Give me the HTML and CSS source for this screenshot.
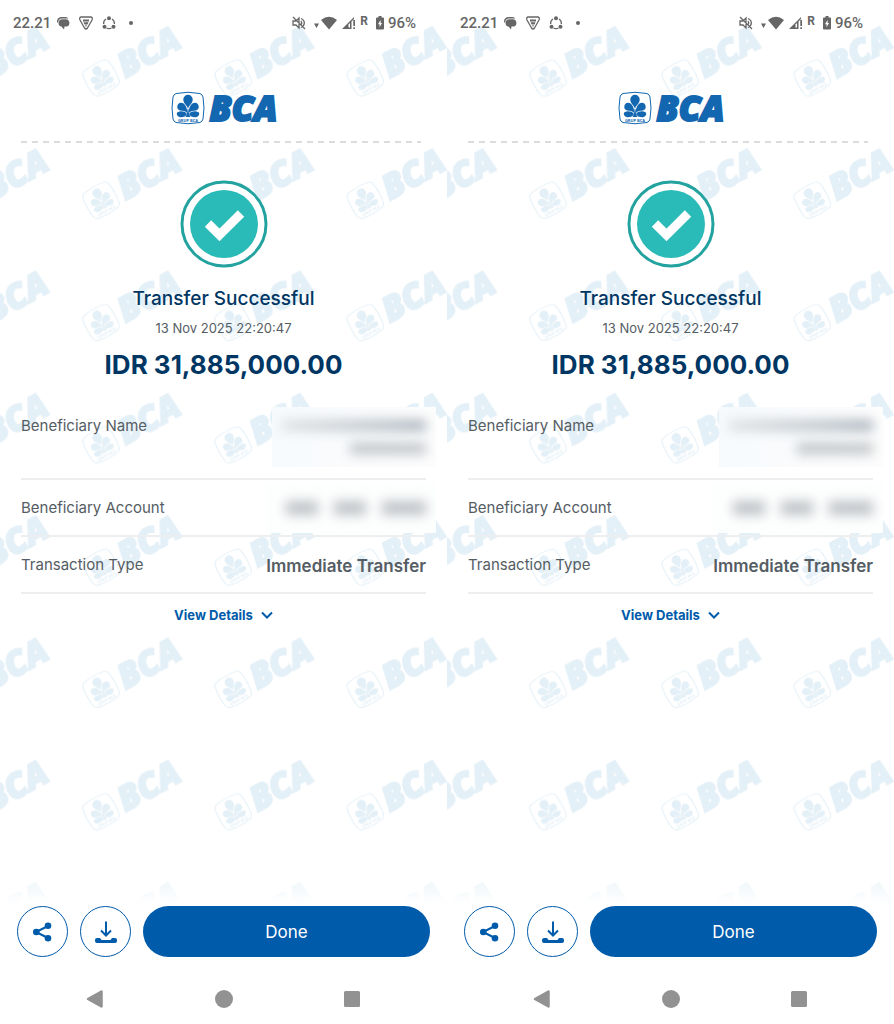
FILE: index.html
```html
<!DOCTYPE html>
<html lang="en">
<head>
    <meta charset="UTF-8">
    <meta name="viewport" content="width=device-width, initial-scale=1.0">
    <title>Transfer Successful | BCA</title>
    <link rel="stylesheet" href="styles.css">
</head>
<body>
    <!-- Shared icons -->
    <svg class="sprite" width="0" height="0" aria-hidden="true">
        <defs>
            <symbol id="logo" viewBox="-17 -18 108 36">
                <path d="M-12 -14.500Q0 -17 12 -14.500Q14.500 -13.500 15 -11Q17 0 15 11Q14.500 13.500 12 14.500Q0 17 -12 14.500Q-14.500 13.500 -15 11Q-17 0 -15 -11Q-14.500 -13.500 -12 -14.500Z" fill="#fff" stroke="currentColor" stroke-width="1"/>
                <g fill="currentColor">
                    <path d="M0 1C-.5 -3 -4.700 -4 -4.700 -8.500A4.700 4.700 0 0 1 4.700 -8.500C4.700 -4 .5 -3 0 1Z"/>
                    <path d="M-.8 5C-.5 1 -2.500 -5.200 -7 -5.200A3.900 3.900 0 0 0 -8 2.400C-5 2.800 -2.500 2.500 -.8 5Z"/>
                    <path d="M.8 5C.5 1 2.500 -5.200 7 -5.200A3.900 3.900 0 0 1 8 2.400C5 2.800 2.500 2.500 .8 5Z"/>
                    <path d="M-1 6C-3 2.800 -8 2.800 -10.500 4.200C-12.500 6 -10 9.300 -7 9.300C-4 9.300 -2 8 -1 6Z"/>
                    <path d="M1 6C3 2.800 8 2.800 10.500 4.200C12.500 6 10 9.300 7 9.300C4 9.300 2 8 1 6Z"/>
                    <path d="M-.4 1H.4L1 6L2.500 9H-2.500L-1 6Z"/>
                </g>
                <text class="logo-group" x="0" y="13.500" text-anchor="middle">GRUP BCA</text>
                <text class="logo-name" x="21.500" y="12.500">BCA</text>
            </symbol>
            <pattern id="marks" x="66" y="20" width="132.200" height="122.300" patternUnits="userSpaceOnUse">
                <use class="mark" href="#logo" x="-17" y="-18" width="108" height="36" transform="translate(35 58) rotate(-29) scale(.98)"/>
            </pattern>
            <symbol id="chat" viewBox="0 0 14 14">
                <path d="M1 6C1 2.500 3 1 6 1H9C10.500 1 11.500 1.500 12.200 2.500H6C3.500 2.500 2.200 4 2 7Z" fill="currentColor"/>
                <path d="M2.500 7C2.500 4.500 4 3.200 6.500 3.200H10C14.500 3.200 14.500 10.500 10.500 10.500H8.500L8 13.500L5.500 10.500C3.500 10.300 2.500 9 2.500 7Z" fill="currentColor"/>
            </symbol>
            <symbol id="shield" viewBox="0 0 14 14">
                <path d="M2 1H12Q14 1.500 13 4L8.500 12Q7 14 5.500 12L1 4Q0 1.500 2 1Z" fill="none" stroke="currentColor" stroke-width="1.300"/>
                <path d="M4 3.500H10V5.500H4ZM4.500 6.300H9.500L8.500 8.500H5.500ZM6 9.300H8L7 11Z" fill="currentColor"/>
            </symbol>
            <symbol id="nodes" viewBox="0 0 14 14">
                <path d="M4 3C2 4 1.500 6 1.600 8M10 3C12 4 12.500 6 12.400 8M4.500 12Q7 13.200 9.500 12" fill="none" stroke="currentColor" stroke-width="1.300"/>
                <g fill="currentColor"><circle cx="7" cy="2.300" r="2"/><circle cx="2.500" cy="10.700" r="2"/><circle cx="11.500" cy="10.700" r="2"/></g>
            </symbol>
            <symbol id="mute" viewBox="0 0 14 14">
                <path d="M1 5H4L7 2V12L4 9H1ZM9 5Q10.500 7 9 9M9 2.500Q12.500 4 12.300 7Q12.300 10 9 11.500M1 1L13 13" fill="none" stroke="currentColor" stroke-width="1.300"/>
            </symbol>
            <symbol id="wifi" viewBox="0 0 24 14">
                <path d="M0 7.500H5L2.500 12ZM7 4Q15 -2.500 23 4L15 13.500Z" fill="currentColor"/>
            </symbol>
            <symbol id="signal" viewBox="0 0 14 14">
                <path d="M0 13L12 1V3L9.500 5.500V13ZM11.300 4H13V10H11.300ZM11.300 11.300H13V13H11.300Z" fill="currentColor"/>
                <path d="M6.500 8.500L8 7V11.500H6.500Z" fill="#fff"/>
            </symbol>
            <symbol id="battery" viewBox="0 0 8 14">
                <path fill-rule="evenodd" d="M2.500 0H5.500V1.500H7Q8 1.500 8 2.500V12.500Q8 13.500 7 13.500H1Q0 13.500 0 12.500V2.500Q0 1.500 1 1.500H2.500ZM4.600 4L2 8.300H3.600V11.200L6 7H4.600Z" fill="currentColor"/>
            </symbol>
            <symbol id="success" viewBox="0 0 88 88">
                <circle cx="44" cy="44" r="42" fill="#fff" stroke="#23a39f" stroke-width="3"/>
                <circle cx="44" cy="44" r="34" fill="#2abab7"/>
                <path d="M28 43.500L39.500 55L61 33.500" fill="none" stroke="#fff" stroke-width="9"/>
            </symbol>
            <symbol id="chevron" viewBox="0 0 12 8">
                <path d="M1 1.500L6 6.500L11 1.500" fill="none" stroke="currentColor" stroke-width="2"/>
            </symbol>
            <symbol id="share" viewBox="0 0 20 20">
                <path d="M15 4L3 10L15 16" fill="none" stroke="currentColor" stroke-width="2"/>
                <g fill="currentColor"><circle cx="3.300" cy="10" r="3.300"/><circle cx="15" cy="3.700" r="3.300"/><circle cx="15" cy="16.300" r="3.300"/></g>
            </symbol>
            <symbol id="download" viewBox="0 0 22 22">
                <path d="M11 .5V14.500M6 9.500L11 14.500L16 9.500" fill="none" stroke="currentColor" stroke-width="2"/>
                <path d="M2 17H5L6.500 19H15.500L17 17H20Q22 17 22 19V20Q22 22 20 22H2Q0 22 0 20V19Q0 17 2 17Z" fill="currentColor"/>
            </symbol>
            <symbol id="nav-back" viewBox="0 0 18 18">
                <path d="M15.500 1.500L2 9L15.500 16.500Z" fill="currentColor" stroke="currentColor" stroke-width="2.500" stroke-linejoin="round"/>
            </symbol>
            <symbol id="nav-home" viewBox="0 0 18 18">
                <circle cx="9" cy="9" r="9" fill="currentColor"/>
            </symbol>
            <symbol id="nav-recent" viewBox="0 0 18 18">
                <rect x="1" y="1" width="16" height="16" rx="1.500" fill="currentColor"/>
            </symbol>
        </defs>
    </svg>

    <main class="screens">
        <section class="phone">
            <svg class="watermark" aria-hidden="true"><rect width="100%" height="100%" fill="url(#marks)"/></svg>
            <div class="status-bar">
                <span class="clock">22.21</span>
                <svg class="status-icon"><use href="#chat"/></svg>
                <svg class="status-icon"><use href="#shield"/></svg>
                <svg class="status-icon"><use href="#nodes"/></svg>
                <span class="dot"></span>
                <div class="status-right">
                    <svg class="status-icon"><use href="#mute"/></svg>
                    <svg class="wifi-icon"><use href="#wifi"/></svg>
                    <svg class="status-icon"><use href="#signal"/></svg>
                    <span class="roaming">R</span>
                    <svg class="battery-icon"><use href="#battery"/></svg>
                    <span>96%</span>
                </div>
            </div>
            <header class="brand">
                <svg class="logo" role="img" aria-label="BCA"><use href="#logo"/></svg>
            </header>
            <div class="receipt">
                <svg class="success-icon" aria-hidden="true"><use href="#success"/></svg>
                <h1>Transfer Successful</h1>
                <p class="date">13 Nov 2025 22:20:47</p>
                <p class="amount">IDR 31,885,000.00</p>
                <dl class="details">
                    <div class="row row-name">
                        <dt>Beneficiary Name</dt>
                        <dd class="hidden-value"><span class="smudge smudge-long"></span><span class="smudge smudge-short"></span></dd>
                    </div>
                    <div class="row">
                        <dt>Beneficiary Account</dt>
                        <dd class="hidden-value hidden-account"><span class="smudge smudge-part"></span><span class="smudge smudge-part"></span><span class="smudge"></span></dd>
                    </div>
                    <div class="row">
                        <dt>Transaction Type</dt>
                        <dd>Immediate Transfer</dd>
                    </div>
                </dl>
                <button class="view-details" type="button">View Details <svg class="chevron"><use href="#chevron"/></svg></button>
            </div>
            <div class="actions">
                <button class="round-btn" type="button" aria-label="Share"><svg class="share-icon"><use href="#share"/></svg></button>
                <button class="round-btn" type="button" aria-label="Download"><svg class="download-icon"><use href="#download"/></svg></button>
                <button class="done-btn" type="button">Done</button>
            </div>
            <nav class="nav-bar">
                <button type="button" aria-label="Back"><svg><use href="#nav-back"/></svg></button>
                <button type="button" aria-label="Home"><svg><use href="#nav-home"/></svg></button>
                <button type="button" aria-label="Recent apps"><svg><use href="#nav-recent"/></svg></button>
            </nav>
        </section>

        <section class="phone">
            <svg class="watermark" aria-hidden="true"><rect width="100%" height="100%" fill="url(#marks)"/></svg>
            <div class="status-bar">
                <span class="clock">22.21</span>
                <svg class="status-icon"><use href="#chat"/></svg>
                <svg class="status-icon"><use href="#shield"/></svg>
                <svg class="status-icon"><use href="#nodes"/></svg>
                <span class="dot"></span>
                <div class="status-right">
                    <svg class="status-icon"><use href="#mute"/></svg>
                    <svg class="wifi-icon"><use href="#wifi"/></svg>
                    <svg class="status-icon"><use href="#signal"/></svg>
                    <span class="roaming">R</span>
                    <svg class="battery-icon"><use href="#battery"/></svg>
                    <span>96%</span>
                </div>
            </div>
            <header class="brand">
                <svg class="logo" role="img" aria-label="BCA"><use href="#logo"/></svg>
            </header>
            <div class="receipt">
                <svg class="success-icon" aria-hidden="true"><use href="#success"/></svg>
                <h1>Transfer Successful</h1>
                <p class="date">13 Nov 2025 22:20:47</p>
                <p class="amount">IDR 31,885,000.00</p>
                <dl class="details">
                    <div class="row row-name">
                        <dt>Beneficiary Name</dt>
                        <dd class="hidden-value"><span class="smudge smudge-long"></span><span class="smudge smudge-short"></span></dd>
                    </div>
                    <div class="row">
                        <dt>Beneficiary Account</dt>
                        <dd class="hidden-value hidden-account"><span class="smudge smudge-part"></span><span class="smudge smudge-part"></span><span class="smudge"></span></dd>
                    </div>
                    <div class="row">
                        <dt>Transaction Type</dt>
                        <dd>Immediate Transfer</dd>
                    </div>
                </dl>
                <button class="view-details" type="button">View Details <svg class="chevron"><use href="#chevron"/></svg></button>
            </div>
            <div class="actions">
                <button class="round-btn" type="button" aria-label="Share"><svg class="share-icon"><use href="#share"/></svg></button>
                <button class="round-btn" type="button" aria-label="Download"><svg class="download-icon"><use href="#download"/></svg></button>
                <button class="done-btn" type="button">Done</button>
            </div>
            <nav class="nav-bar">
                <button type="button" aria-label="Back"><svg><use href="#nav-back"/></svg></button>
                <button type="button" aria-label="Home"><svg><use href="#nav-home"/></svg></button>
                <button type="button" aria-label="Recent apps"><svg><use href="#nav-recent"/></svg></button>
            </nav>
        </section>
    </main>
</body>
</html>
```

FILE: styles.css
```css
:root {
    --blue: #005baa;
    --logo-blue: #1267b0;
    --navy: #003663;
    --text: #555d64;
    --line: #eceef0;
}

* {
    box-sizing: border-box;
}

body {
    margin: 0;
    background: #fff;
    color: var(--text);
    font-family: Inter, 'Open Sans', sans-serif;
}

h1, p, dl, dd {
    margin: 0;
}

button {
    border: none;
    padding: 0;
    background: none;
    color: inherit;
    font-family: inherit;
    cursor: pointer;
}

.sprite {
    position: absolute;
}

.screens {
    display: flex;
    min-height: 100vh;
}

.phone {
    position: relative;
    isolation: isolate;
    flex: 1;
    min-width: 0;
    display: flex;
    flex-direction: column;
    overflow: hidden;
}

.watermark {
    position: absolute;
    inset: 0;
    z-index: -1;
    width: 100%;
    height: 100%;
    -webkit-mask-image: linear-gradient(to top, transparent 120px, #000 160px);
    mask-image: linear-gradient(to top, transparent 120px, #000 160px);
}

.mark {
    color: #e4f0f7;
}

/* Status bar */
.status-bar {
    display: flex;
    align-items: center;
    gap: 9px;
    height: 45px;
    padding: 0 31px 0 13px;
    color: #666;
    font-family: Roboto, sans-serif;
    font-size: 15px;
    font-weight: 500;
}

.clock {
    margin-right: -4px;
}

.status-icon {
    width: 14px;
    height: 14px;
}

.dot {
    width: 4px;
    height: 4px;
    margin-left: 4px;
    border-radius: 50%;
    background: currentColor;
}

.status-right {
    display: flex;
    align-items: center;
    gap: 4px;
    margin-left: auto;
}

.wifi-icon {
    width: 24px;
    height: 14px;
    margin-left: 4px;
}

.roaming {
    margin-right: 4px;
    padding-bottom: 4px;
    font-size: 12px;
    font-weight: 700;
}

.battery-icon {
    width: 8px;
    height: 14px;
}

/* Bank logo */
.brand {
    display: flex;
    justify-content: center;
    margin: 0 26px 0 21px;
    padding: 45px 0 17px 8px;
    background: repeating-linear-gradient(to right, #dcdcdc 0 6px, transparent 6px 11px) bottom / 100% 2px no-repeat;
}

.logo {
    width: 108px;
    height: 36px;
    color: var(--logo-blue);
}

.logo-name {
    fill: currentColor;
    stroke: currentColor;
    stroke-width: 2px;
    font: italic 800 35px 'Open Sans', sans-serif;
}

.logo-group {
    fill: currentColor;
    font: 700 4px 'Open Sans', sans-serif;
}

/* Receipt */
.receipt {
    flex: 1;
    display: flex;
    flex-direction: column;
    align-items: center;
    padding: 37px 21px 0;
}

.success-icon {
    width: 88px;
    height: 88px;
}

h1 {
    margin-top: 18px;
    color: var(--navy);
    font-size: 19px;
    font-weight: 500;
    line-height: 26px;
}

.date {
    margin-top: 7px;
    font-size: 13px;
    line-height: 18px;
}

.amount {
    margin-top: 12px;
    color: var(--navy);
    font-size: 26px;
    font-weight: 700;
    line-height: 32px;
}

.details {
    align-self: stretch;
    margin-top: 24px;
}

.row {
    display: flex;
    justify-content: space-between;
    height: 57px;
    padding-top: 17px;
    border-bottom: 2px solid var(--line);
    font-size: 15px;
    line-height: 22px;
}

.row-name {
    height: 75px;
    padding-top: 10px;
}

.row dd {
    font-size: 17px;
    font-weight: 600;
    line-height: 24px;
}

/* Values kept private */
.row .hidden-value {
    display: flex;
    flex-direction: column;
    align-items: flex-end;
    gap: 12px;
    width: 164px;
    height: 60px;
    margin: -8px -10px 0 0;
    padding: 13px 10px;
    background: linear-gradient(to right, #f7fafd, #fdfdfd);
}

.row .hidden-account {
    flex-direction: row;
    justify-content: flex-end;
    gap: 16px;
    width: 170px;
    height: 50px;
    margin-top: -14px;
    padding: 18px 10px;
    background: #fdfefe;
}

.smudge {
    width: 44px;
    height: 14px;
    background: #bfc3c7;
    filter: blur(6px);
}

.smudge-long {
    width: 144px;
    background: linear-gradient(to right, #dfe1e3, #a8b2bb);
}

.smudge-short {
    width: 76px;
}

.smudge-part {
    width: 32px;
}

.view-details {
    display: flex;
    align-items: center;
    gap: 8px;
    margin-top: 11px;
    color: var(--blue);
    font-size: 13px;
    font-weight: 700;
    line-height: 20px;
}

.chevron {
    width: 12px;
    height: 8px;
}

/* Bottom buttons */
.actions {
    display: flex;
    gap: 12px;
    padding: 0 17px;
}

.round-btn {
    display: flex;
    align-items: center;
    justify-content: center;
    width: 51px;
    height: 51px;
    border: 1px solid var(--blue);
    border-radius: 50%;
    background: #fff;
    color: var(--blue);
}

.share-icon {
    width: 20px;
    height: 20px;
}

.download-icon {
    width: 22px;
    height: 22px;
}

.done-btn {
    flex: 1;
    border-radius: 26px;
    background: var(--blue);
    color: #fff;
    font-size: 17px;
}

.nav-bar {
    display: flex;
    justify-content: space-between;
    padding: 33px 86px 16px;
    color: #929292;
}

.nav-bar button,
.nav-bar svg {
    display: block;
    width: 18px;
    height: 18px;
}
```
